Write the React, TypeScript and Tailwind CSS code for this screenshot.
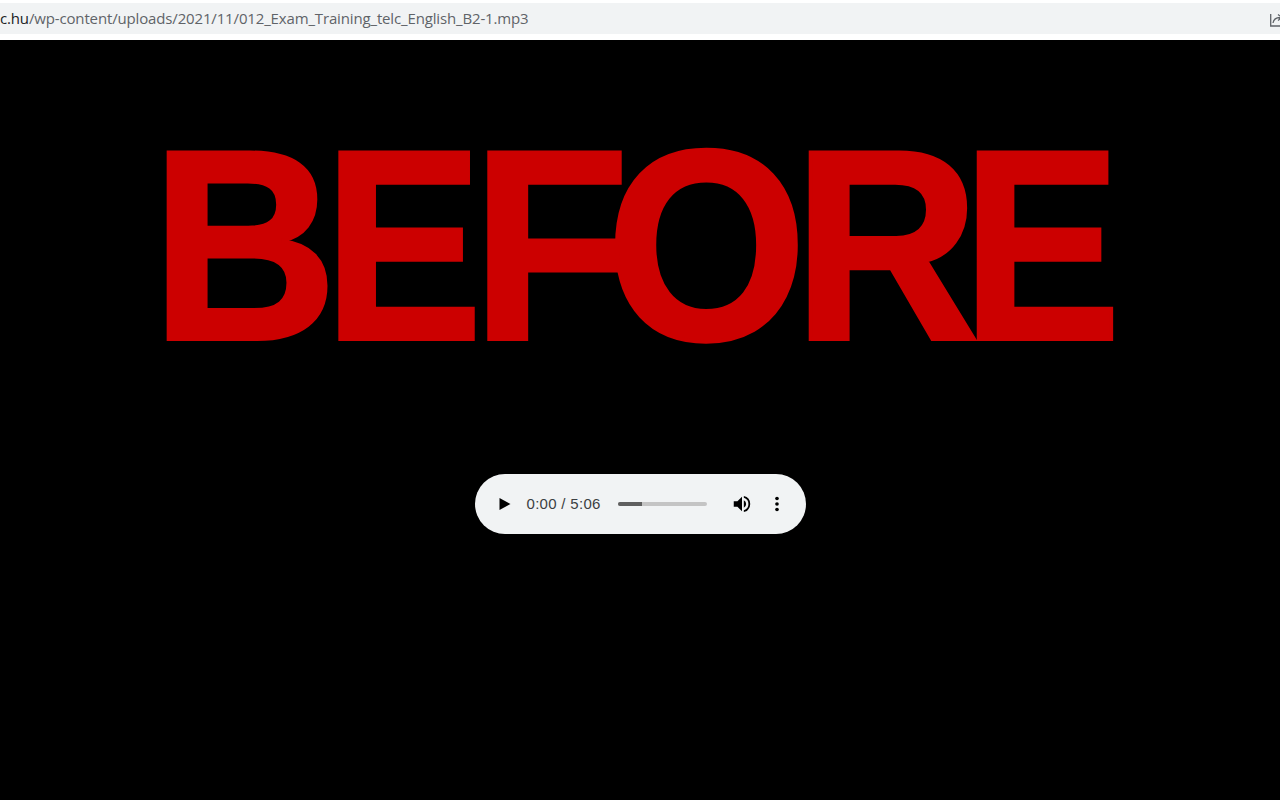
export default function App() {
  return (
    <div className="h-[800px] w-[1280px] overflow-hidden bg-black">
      {/* browser address bar */}
      <div className="h-[40px] bg-white pt-[3px]">
        <div className="flex h-[31px] items-center justify-between overflow-hidden bg-[#f1f3f4] font-['Open_Sans',sans-serif] text-[15px] tracking-[-0.15px] whitespace-nowrap">
          <div className="text-[#5f6368]">
            <span className="text-[#202124]">c.hu</span>/wp-content/uploads/2021/11/012_Exam_Training_telc_English_B2-1.mp3
          </div>
          <svg className="mr-[-4px] mt-[2px] h-[14px] w-[14px] shrink-0" viewBox="0 0 14 14" fill="none" stroke="#5f6368" strokeWidth="1.3">
            <path d="M0.7 1v12h12" />
            <path d="M3 10c.6-3.4 3-5.5 7-5.5M8 1.5l4 3-4 3" />
          </svg>
        </div>
      </div>

      <div className="flex flex-col items-center">
        <h1 className="mt-[57px] ml-[-13px] h-[296px] origin-center scale-x-[0.95] font-['Liberation_Sans',Arial,sans-serif] text-[271px] leading-[296px] font-bold tracking-[-20px] whitespace-nowrap text-[#cc0000] [-webkit-text-stroke:4px_#cc0000]">
          <span className="mr-[6px] inline-block">B</span>
          <span className="mr-[-5px] inline-block origin-left scale-x-[0.92]">E</span>
          <span className="mr-[-4px] inline-block">F</span>
          <span className="mr-[6px] inline-block">O</span>
          <span className="mr-[2px] inline-block">R</span>
          <span className="inline-block origin-left scale-x-[0.92]">E</span>
        </h1>

        {/* audio player */}
        <div className="mt-[81px] flex h-[60px] w-[331px] items-center rounded-[30px] bg-[#f1f3f4] font-['Liberation_Sans',Arial,sans-serif] text-[#3c4043]">
          <svg className="ml-[24px] h-[12px] w-[12px] shrink-0" viewBox="0 0 12 12" fill="#000">
            <path d="M0.5 0v12L11.5 6z" />
          </svg>
          <span className="ml-[16px] w-[73px] text-[15px] tracking-[0.3px] whitespace-nowrap">0:00 / 5:06</span>
          <div className="ml-[18px] flex h-[4px] w-[89px] overflow-hidden rounded-full bg-[#c4c4c4]">
            <div className="h-full w-[24px] bg-[#5f5f5f]" />
          </div>
          <svg className="ml-[24px] h-[22px] w-[22px] shrink-0" viewBox="0 0 24 24" fill="#000">
            <path d="M3 9v6h4l5 5V4L7 9H3zm13.5 3A4.5 4.5 0 0 0 14 7.97v8.05A4.5 4.5 0 0 0 16.5 12zM14 3.23v2.06a7 7 0 0 1 0 13.42v2.06a9 9 0 0 0 0-17.54z" />
          </svg>
          <svg className="ml-[13px] h-[22px] w-[22px] shrink-0" viewBox="0 0 24 24" fill="#000">
            <circle cx="12" cy="6" r="2" />
            <circle cx="12" cy="12" r="2" />
            <circle cx="12" cy="18" r="2" />
          </svg>
        </div>
      </div>
    </div>
  );
}
